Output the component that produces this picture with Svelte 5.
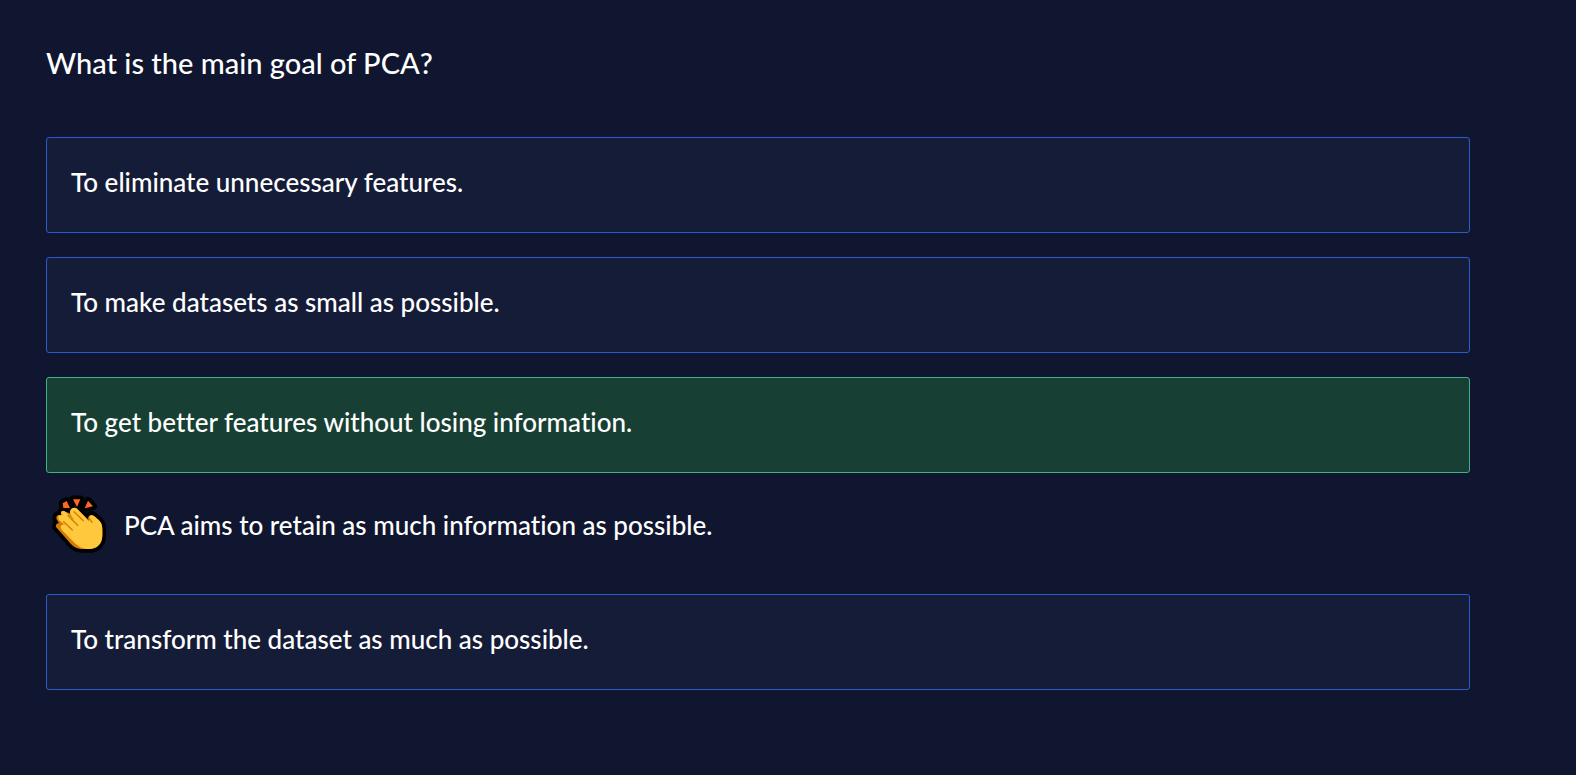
<script>
  const options = [
    { text: 'To eliminate unnecessary features.' },
    { text: 'To make datasets as small as possible.' },
    {
      text: 'To get better features without losing information.',
      correct: true,
      feedback: 'PCA aims to retain as much information as possible.'
    },
    { text: 'To transform the dataset as much as possible.' }
  ];
</script>

<main>
  <h1>What is the main goal of PCA?</h1>
  <ul>
    {#each options as option}
      <li>
        <button type="button" class:correct={option.correct}>{option.text}</button>
        {#if option.feedback}
          <div class="feedback">
            <svg viewBox="36 33 168 174" aria-hidden="true">
              <g stroke="#000" stroke-width="23" stroke-linejoin="round" fill="#000">
                <path d="M68 55L80 48L90 69L70 69ZM99 43H121L111 66ZM144 47L159 64L134 70Z" />
                <path d="M48 126C46 118 53 112 58 116L50 103C46 94 54 87 61 91L64 89C59 80 68 74 76 80L94 86C87 72 104 63 112 72L148 107C140 96 150 86 161 92L176 105C184 112 187 121 187 134V151C187 177 171 192 147 192H128C110 192 97 183 87 170Z" />
              </g>
              <path fill="#ff6723" d="M68 55L80 48L90 69L70 69ZM99 43H121L111 66ZM144 47L159 64L134 70Z" />
              <path fill="#d67d00" d="M48 126C46 118 53 112 58 116L50 103C46 94 54 87 61 91L64 89C59 80 68 74 76 80L94 86C87 72 104 63 112 72L148 107C140 96 150 86 161 92L176 105C184 112 187 121 187 134V151C187 177 171 192 147 192H128C110 192 97 183 87 170Z" />
              <path fill="#ffc83d" d="M65 88C60 79 70 74 77 81L104 107L92 89C84 73 101 63 112 72L148 110C141 97 151 86 162 93L176 105C184 112 187 121 187 134V151C187 177 171 192 147 192H139C124 190 114 184 105 175L65 134C58 123 67 114 77 121L59 107C48 95 60 85 71 92Z" />
              <path fill="none" stroke="#d67d00" stroke-width="4" stroke-linecap="round" d="M102 80L130 107M84 92L113 121M71 110L97 135M147 99L156 112" />
            </svg>
            <p>{option.feedback}</p>
          </div>
        {/if}
      </li>
    {/each}
  </ul>
</main>

<style>
  :global(body) {
    margin: 0;
    background: #10162f;
  }

  main {
    padding: 43px 106px 84px 46px;
    color: #fff;
    font-family: Lato, sans-serif;
    font-size: 26px;
    font-weight: 500;
    font-variant-ligatures: none;
    line-height: 40px;
  }

  h1 {
    margin: 0 0 54px;
    font-size: 29px;
    font-weight: 500;
    line-height: 40px;
  }

  ul {
    display: flex;
    flex-direction: column;
    gap: 24px;
    margin: 0;
    padding: 0;
    list-style: none;
  }

  button {
    display: block;
    box-sizing: border-box;
    width: 100%;
    padding: 24px 24px 30px;
    border: 1px solid #2b5ccd;
    border-radius: 3px;
    background: #151c38;
    color: inherit;
    font: inherit;
    font-variant-ligatures: none;
    text-align: left;
    cursor: pointer;
  }

  .correct {
    border-color: #3fb28a;
    background: #173f33;
  }

  .feedback {
    display: flex;
    align-items: center;
    gap: 16px;
    padding: 23px 6px 16px;
  }

  svg {
    flex: none;
    width: 56px;
    height: 58px;
    overflow: visible;
  }

  p {
    margin: 0;
  }
</style>
